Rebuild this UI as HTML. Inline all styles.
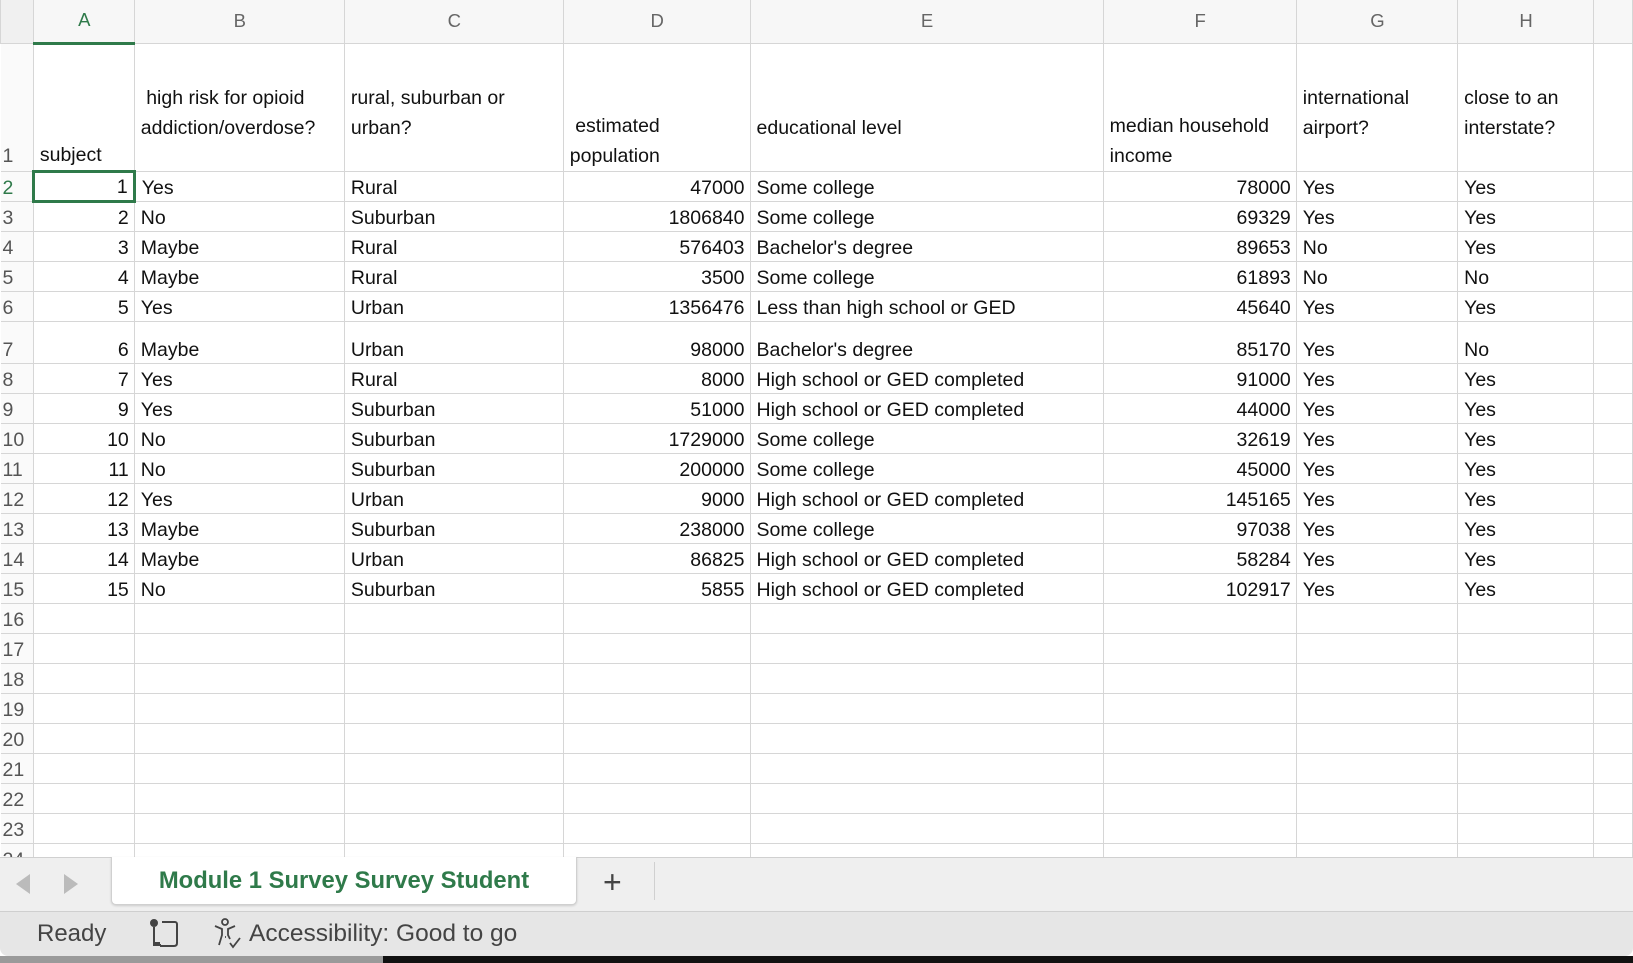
<!DOCTYPE html>
<html><head><meta charset="utf-8"><style>
*{margin:0;padding:0;box-sizing:border-box}
body{width:1633px;height:963px;overflow:hidden;background:#fff;font-family:"Liberation Sans",sans-serif;position:relative}
table{border-collapse:collapse;table-layout:fixed;position:absolute;left:0;top:0}
td{border:1px solid #d6d6d6;font-size:19.5px;color:#111;vertical-align:bottom;padding:0 5px 1px 6px;white-space:nowrap;overflow:hidden;line-height:24px}
td.rh{color:#555;text-align:left;padding-left:2px;background:#fafafa;border-left:none}
tr.ch td{background:#f7f7f7;color:#666;text-align:center;vertical-align:middle;font-size:18.5px;border-top:none}
tr.h1 td{line-height:30px;padding-bottom:0}
td.n{text-align:right}
.sel{color:#2f7a4a!important}
#selA{border-bottom:3px solid #2f7a4a}
tr.r td{height:30px}
</style></head><body>
<table>
<colgroup><col style="width:33px"><col style="width:102px"><col style="width:211px"><col style="width:221px"><col style="width:190px"><col style="width:356px"><col style="width:194px"><col style="width:163px"><col style="width:137px"><col style="width:40px"></colgroup>
<tr class="ch" style="height:43px"><td style="background:#f0f0f0"></td><td id="selA" class="sel">A</td><td>B</td><td>C</td><td>D</td><td>E</td><td>F</td><td>G</td><td>H</td><td></td></tr>
<tr class="h1" style="height:128px"><td class="rh">1</td><td>subject</td><td style="vertical-align:top;padding-top:39px">&nbsp;high risk for opioid<br>addiction/overdose?</td><td style="vertical-align:top;padding-top:39px">rural, suburban or<br>urban?</td><td>&nbsp;estimated<br>population</td><td style="vertical-align:top;padding-top:69px">educational level</td><td>median household<br>income</td><td style="vertical-align:top;padding-top:39px">international<br>airport?</td><td style="vertical-align:top;padding-top:39px">close to an<br>interstate?</td><td></td></tr>
<tr class="r"><td class="rh sel">2</td><td class="n" style="border:3px solid #2f7a4a">1</td><td>Yes</td><td>Rural</td><td class="n">47000</td><td>Some college</td><td class="n">78000</td><td>Yes</td><td>Yes</td><td></td></tr>
<tr class="r"><td class="rh">3</td><td class="n">2</td><td>No</td><td>Suburban</td><td class="n">1806840</td><td>Some college</td><td class="n">69329</td><td>Yes</td><td>Yes</td><td></td></tr>
<tr class="r"><td class="rh">4</td><td class="n">3</td><td>Maybe</td><td>Rural</td><td class="n">576403</td><td>Bachelor's degree</td><td class="n">89653</td><td>No</td><td>Yes</td><td></td></tr>
<tr class="r"><td class="rh">5</td><td class="n">4</td><td>Maybe</td><td>Rural</td><td class="n">3500</td><td>Some college</td><td class="n">61893</td><td>No</td><td>No</td><td></td></tr>
<tr class="r"><td class="rh">6</td><td class="n">5</td><td>Yes</td><td>Urban</td><td class="n">1356476</td><td>Less than high school or GED</td><td class="n">45640</td><td>Yes</td><td>Yes</td><td></td></tr>
<tr class="r"><td class="rh" style="height:42px">7</td><td class="n">6</td><td>Maybe</td><td>Urban</td><td class="n">98000</td><td>Bachelor's degree</td><td class="n">85170</td><td>Yes</td><td>No</td><td></td></tr>
<tr class="r"><td class="rh">8</td><td class="n">7</td><td>Yes</td><td>Rural</td><td class="n">8000</td><td>High school or GED completed</td><td class="n">91000</td><td>Yes</td><td>Yes</td><td></td></tr>
<tr class="r"><td class="rh">9</td><td class="n">9</td><td>Yes</td><td>Suburban</td><td class="n">51000</td><td>High school or GED completed</td><td class="n">44000</td><td>Yes</td><td>Yes</td><td></td></tr>
<tr class="r"><td class="rh">10</td><td class="n">10</td><td>No</td><td>Suburban</td><td class="n">1729000</td><td>Some college</td><td class="n">32619</td><td>Yes</td><td>Yes</td><td></td></tr>
<tr class="r"><td class="rh">11</td><td class="n">11</td><td>No</td><td>Suburban</td><td class="n">200000</td><td>Some college</td><td class="n">45000</td><td>Yes</td><td>Yes</td><td></td></tr>
<tr class="r"><td class="rh">12</td><td class="n">12</td><td>Yes</td><td>Urban</td><td class="n">9000</td><td>High school or GED completed</td><td class="n">145165</td><td>Yes</td><td>Yes</td><td></td></tr>
<tr class="r"><td class="rh">13</td><td class="n">13</td><td>Maybe</td><td>Suburban</td><td class="n">238000</td><td>Some college</td><td class="n">97038</td><td>Yes</td><td>Yes</td><td></td></tr>
<tr class="r"><td class="rh">14</td><td class="n">14</td><td>Maybe</td><td>Urban</td><td class="n">86825</td><td>High school or GED completed</td><td class="n">58284</td><td>Yes</td><td>Yes</td><td></td></tr>
<tr class="r"><td class="rh">15</td><td class="n">15</td><td>No</td><td>Suburban</td><td class="n">5855</td><td>High school or GED completed</td><td class="n">102917</td><td>Yes</td><td>Yes</td><td></td></tr>
<tr class="r"><td class="rh">16</td><td></td><td></td><td></td><td></td><td></td><td></td><td></td><td></td><td></td></tr>
<tr class="r"><td class="rh">17</td><td></td><td></td><td></td><td></td><td></td><td></td><td></td><td></td><td></td></tr>
<tr class="r"><td class="rh">18</td><td></td><td></td><td></td><td></td><td></td><td></td><td></td><td></td><td></td></tr>
<tr class="r"><td class="rh">19</td><td></td><td></td><td></td><td></td><td></td><td></td><td></td><td></td><td></td></tr>
<tr class="r"><td class="rh">20</td><td></td><td></td><td></td><td></td><td></td><td></td><td></td><td></td><td></td></tr>
<tr class="r"><td class="rh">21</td><td></td><td></td><td></td><td></td><td></td><td></td><td></td><td></td><td></td></tr>
<tr class="r"><td class="rh">22</td><td></td><td></td><td></td><td></td><td></td><td></td><td></td><td></td><td></td></tr>
<tr class="r"><td class="rh">23</td><td></td><td></td><td></td><td></td><td></td><td></td><td></td><td></td><td></td></tr>
<tr class="r"><td class="rh">24</td><td></td><td></td><td></td><td></td><td></td><td></td><td></td><td></td><td></td></tr>
</table>
<div style="position:absolute;left:0;top:857px;width:1633px;height:54px;background:#efefef;border-top:1px solid #d0d0d0"></div>
<div style="position:absolute;left:16px;top:874px;width:0;height:0;border-top:10px solid transparent;border-bottom:10px solid transparent;border-right:14px solid #bbb"></div>
<div style="position:absolute;left:64px;top:874px;width:0;height:0;border-top:10px solid transparent;border-bottom:10px solid transparent;border-left:14px solid #bbb"></div>
<div style="position:absolute;left:111px;top:857px;width:466px;height:48px;background:#fff;border:1px solid #d0d0d0;border-top:none;border-radius:0 0 5px 5px;box-shadow:0 1px 2px rgba(0,0,0,.15);text-align:center;font-weight:bold;color:#2f7a4a;font-size:23.8px;line-height:48px">Module 1 Survey Survey Student</div>
<div style="position:absolute;left:603px;top:862px;font-size:32px;color:#444;line-height:40px">+</div>
<div style="position:absolute;left:654px;top:862px;width:1px;height:38px;background:#d0d0d0"></div>
<div style="position:absolute;left:0;top:911px;width:1633px;height:45px;background:#e6e6e6;border-top:1px solid #cfcfcf;border-radius:0 0 8px 8px"></div>
<div style="position:absolute;left:0;top:956px;width:1633px;height:7px;background:#9a9a9a"></div>
<div style="position:absolute;left:383px;top:956px;width:1250px;height:7px;background:#111"></div>
<div style="position:absolute;left:37px;top:918px;font-size:24px;color:#444;line-height:32px">Ready</div>
<svg style="position:absolute;left:148px;top:918px" width="32" height="32" viewBox="0 0 32 32" fill="none" stroke="#444" stroke-width="2"><circle cx="6" cy="5" r="3" fill="#444"/><path d="M6 9v16h6M12 28h14c2 0 3-1 3-3V6c0-1-1-2-2-2H14"/><path d="M5 27h8"/></svg>
<svg style="position:absolute;left:212px;top:917px" width="32" height="34" viewBox="0 0 32 34" fill="none" stroke="#444" stroke-width="1.8"><circle cx="13" cy="5" r="3"/><path d="M3 9l7 3v6l-3 10M23 9l-7 3v6l2 4M14 20l-1 0M18 26l3 4 7-9"/></svg>
<div style="position:absolute;left:249px;top:918px;font-size:24.5px;color:#444;line-height:32px">Accessibility: Good to go</div>
</body></html>
